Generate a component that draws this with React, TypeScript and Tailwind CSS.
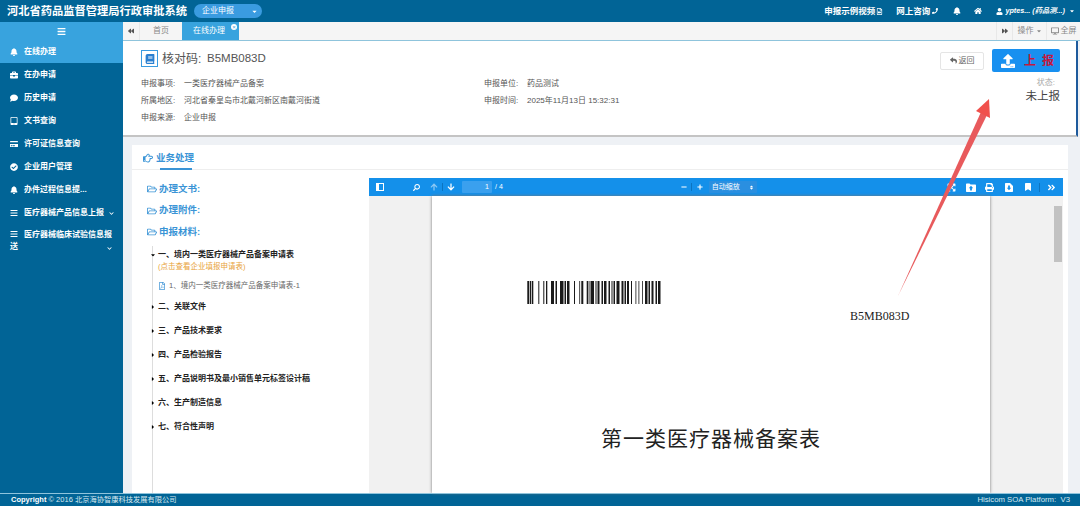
import type { ReactNode } from 'react'
import {
  FaAngleDoubleRight, FaArrowDown, FaArrowUp, FaBars, FaBell, FaBackward, FaBook, FaBookmark, FaBriefcase,
  FaCaretDown, FaCaretRight, FaCheckCircle, FaChevronDown, FaComment, FaCreditCard, FaDesktop, FaExpandArrowsAlt,
  FaForward, FaHome, FaMinus, FaPhone, FaPlus, FaPrint, FaRegFilePdf, FaRegFileVideo,
  FaRegFolderOpen, FaRegHandPointRight, FaReply, FaSearch, FaSort, FaTabletAlt, FaUpload, FaUser,
} from 'react-icons/fa'

const font = { fontFamily: '"Liberation Sans", "Noto Sans CJK SC", sans-serif' }

const menu = [
  { icon: <FaBell />, label: '在线办理', active: true },
  { icon: <FaBriefcase />, label: '在办申请' },
  { icon: <FaComment />, label: '历史申请' },
  { icon: <FaTabletAlt />, label: '文书查询' },
  { icon: <FaCreditCard />, label: '许可证信息查询' },
  { icon: <FaCheckCircle />, label: '企业用户管理' },
  { icon: <FaBell />, label: '办件过程信息提...' },
  { icon: <FaBars />, label: '医疗器械产品信息上报', more: true },
]

const folders = ['办理文书:', '办理附件:', '申报材料:']
const sections = ['二、关联文件', '三、产品技术要求', '四、产品检验报告', '五、产品说明书及最小销售单元标签设计稿', '六、生产制造信息', '七、符合性声明']

const bars = [
  [0.3, 2], [3, 1.3], [5, 1.3], [11.3, 1], [16.3, 1], [19, 1.3], [24, 3], [28.5, 1.5], [33, 3.5], [37.5, 1.5], [40, 2.5],
  [47, 1], [52.3, 0.8], [54.3, 2], [59.7, 1.7], [62.5, 1], [64, 3], [68.5, 1], [70.5, 2], [74.5, 1.5], [77, 2.5],
  [81.5, 1.5], [84.5, 1], [86.5, 1.5], [89.5, 3], [94.5, 2], [97.5, 1.5], [100, 2], [104, 1], [108.5, 0.8], [111.5, 0.8],
  [115, 0.8], [118, 2.5], [121.5, 1.5], [124.5, 2], [128.5, 1.5], [131, 2.5],
]

function Barcode() {
  return (
    <svg width="134" height="23" viewBox="0 0 134 23" className="block">
      {bars.map(([x, w]) => <rect key={x} x={x} y="0" width={w} height="23" fill="#1a1a1a" />)}
    </svg>
  )
}

function SidebarToggleIcon() {
  return (
    <svg width="8" height="8" viewBox="0 0 8 8">
      <path d="M0 0h8v8H0z M3 1v6h4V1z" fill="white" fillRule="evenodd" />
    </svg>
  )
}

function OpenFileIcon() {
  return (
    <svg width="10" height="9" viewBox="0 0 10 9">
      <path d="M0 1.5C0 .9.4.5 1 .5h2.5l1 1H9c.6 0 1 .4 1 1V8c0 .6-.4 1-1 1H1c-.6 0-1-.4-1-1z" fill="white" />
      <path d="M5 2.8 7.2 5.2H5.9V7.6H4.1V5.2H2.8z" fill="#1490ea" />
    </svg>
  )
}

function DownloadFileIcon() {
  return (
    <svg width="8" height="9" viewBox="0 0 8 9">
      <path d="M1 0h4l3 3v5c0 .6-.4 1-1 1H1c-.6 0-1-.4-1-1V1c0-.6.4-1 1-1z" fill="white" />
      <path d="M3.1 2.6h1.8v2.2h1.3L4 7.2 1.8 4.8h1.3z" fill="#1490ea" />
    </svg>
  )
}

function ToolButton({ children }: { children: ReactNode }) {
  return <span className="flex w-[19px] justify-center text-[9px]">{children}</span>
}

function InfoRow({ label, value }: { label: string; value: string }) {
  return (
    <div className="flex h-[17px] items-center text-[8px] text-[#555]">
      <span className="w-[43px]">{label}</span>
      <span>{value}</span>
    </div>
  )
}

function Sidebar() {
  return (
    <aside className="w-[123px] shrink-0 bg-[#016496] text-white">
      <div className="flex h-[18px] items-center justify-center bg-[#38a3de] text-[9px]"><FaBars /></div>
      {menu.map((item) => (
        <div key={item.label} className={`flex h-[23px] items-center pl-[10px] pt-[1px] text-[8px] font-bold ${item.active ? 'bg-[#38a3de]' : ''}`}>
          <span className="w-[14px] text-[8px]">{item.icon}</span>
          <span>{item.label}</span>
          {item.more && <FaChevronDown className="ml-[5px] text-[5px]" />}
        </div>
      ))}
      <div className="relative px-[10px] pt-[5px] text-[8px] font-bold leading-[12px]">
        <span className="inline-block w-[14px] align-[-1px]"><FaBars /></span>
        医疗器械临床试验信息报送
        <FaChevronDown className="absolute right-[11px] top-[22px] text-[5px]" />
      </div>
    </aside>
  )
}

function TabBar() {
  return (
    <div className="flex h-[19px] shrink-0 items-stretch border-b border-[#8fc4dc] bg-[#f5f5f5] text-[8px] text-[#888]">
      <div className="flex w-[17px] items-center justify-center border-r border-[#e8e8e8] text-[#555]"><FaBackward className="text-[6px]" /></div>
      <div className="flex w-[42px] items-center justify-center">首页</div>
      <div className="relative flex w-[57px] items-center justify-center bg-[#38a3de] pr-[3px] text-white">
        在线办理
        <span className="absolute right-[2px] top-[2px] flex h-[6px] w-[6px] items-center justify-center rounded-full bg-white text-[6px] leading-none text-[#38a3de]">×</span>
      </div>
      <div className="flex-1" />
      <div className="flex w-[17px] items-center justify-center border-x border-[#e8e8e8] text-[#555]"><FaForward className="text-[6px]" /></div>
      <div className="flex w-[34px] items-center justify-center gap-[2px] border-r border-[#e8e8e8]">操作<FaCaretDown className="text-[6px]" /></div>
      <div className="flex w-[33px] items-center justify-center gap-[2px]"><FaDesktop className="text-[8px]" />全屏</div>
    </div>
  )
}

function InfoPanel() {
  return (
    <section className="mr-[2px] flex h-[96px] shrink-0 justify-between border-r-2 border-b-2 border-r-[#1e5a9c] border-b-[#c4c4c4] bg-white pl-[18px] pr-[16px]">
      <div className="w-[343px] pt-[9px]">
        <div className="flex h-[17px] items-center">
          <span className="flex h-[17px] w-[17px] items-center justify-center border border-[#3a9be0] text-[10px] text-[#2a7fd0]"><FaBook /></span>
          <span className="ml-[4px] w-[45px] text-[12px] text-[#555]">核对码:</span>
          <span className="text-[11.5px] text-[#555]">B5MB083D</span>
        </div>
        <div className="mt-[8px]">
          <InfoRow label="申报事项:" value="一类医疗器械产品备案" />
          <InfoRow label="所属地区:" value="河北省秦皇岛市北戴河新区南戴河街道" />
          <InfoRow label="申报来源:" value="企业申报" />
        </div>
      </div>
      <div className="flex-1 pt-[34px]">
        <InfoRow label="申报单位:" value="药品测试" />
        <InfoRow label="申报时间:" value="2025年11月13日 15:32:31" />
      </div>
      <div className="flex flex-col items-end pt-[8px]">
        <div className="flex items-center gap-[8px]">
          <div className="flex h-[18px] w-[44px] items-center justify-center gap-[2px] rounded-[2px] border border-[#e5e5e5] text-[8px] text-[#666]"><FaReply className="text-[7px]" />返回</div>
          <div className="flex h-[23px] w-[68px] items-center gap-[9px] rounded-[2px] bg-[#1890f0] pl-[9px] text-[12px] font-bold tracking-[6px] text-[#c4183c]"><FaUpload className="text-[14px] text-white" />上报</div>
        </div>
        <div className="mt-[5px] pr-[5px] text-[8px] text-[#aaa]">状态:</div>
        <div className="text-[11.5px] leading-[14px] text-[#444]">未上报</div>
      </div>
    </section>
  )
}

function FileTree() {
  return (
    <div className="w-[237px] shrink-0 overflow-hidden pl-[13px] pt-[3px]">
      {folders.map((name) => (
        <div key={name} className="mb-[5.5px] flex h-[16px] items-center gap-[2px] pl-[2px] text-[9.5px] font-bold text-[#3a94d6]">
          <FaRegFolderOpen className="text-[10px]" />{name}
        </div>
      ))}
      <div className="ml-[7px] h-full border-l border-[#ddd]">
        <div className="relative pl-[5px] pt-[3px] text-[8px] font-bold leading-[12px] text-[#222]">
          <FaCaretDown className="absolute left-[-3px] top-[6px] text-[6px] text-black" />
          一、境内一类医疗器械产品备案申请表
        </div>
        <div className="pl-[5px] text-[7.5px] leading-[12px] text-[#e8a33a]">(点击查看企业填报申请表)</div>
        <div className="flex items-center gap-[3px] pl-[5px] pt-[7px] text-[7.5px] leading-[12px] text-[#666]">
          <FaRegFilePdf className="text-[8px] text-[#4a9ad8]" />1、境内一类医疗器械产品备案申请表-1
        </div>
        <div className="pt-[3px]">
          {sections.map((name) => (
            <div key={name} className="relative flex h-[24px] items-center pl-[5px] text-[8px] font-bold text-[#222]">
              <FaCaretRight className="absolute left-[-3px] text-[6px] text-black" />
              {name}
            </div>
          ))}
        </div>
      </div>
    </div>
  )
}

function PdfViewer() {
  return (
    <div className="flex min-w-0 flex-1 flex-col">
      <div className="flex h-[18px] shrink-0 items-center bg-[#1490ea] pl-[7px] pr-[2px] text-[8px] text-white">
        <SidebarToggleIcon />
        <FaSearch className="ml-[29px] -scale-x-100 text-[7px]" />
        <FaArrowUp className="ml-[10px] text-[#8cc8f4]" />
        <span className="ml-[4px] h-[8px] w-px bg-[#0c74c0]" />
        <FaArrowDown className="ml-[4px]" />
        <span className="ml-[7px] flex h-[12px] w-[30px] items-center justify-end rounded-[1px] bg-[#3aa0ee] pr-[3px] text-[7px]">1</span>
        <span className="ml-[3px] text-[7px]">/ 4</span>
        <FaMinus className="ml-[178px] text-[6px]" />
        <span className="ml-[4px] h-[8px] w-px bg-[#0c74c0]" />
        <FaPlus className="ml-[5px] text-[6px]" />
        <span className="ml-[6px] flex h-[12px] w-[48px] items-center justify-between rounded-[1px] bg-[#2a8fe0] px-[3px] text-[7px]">自动缩放<FaSort className="text-[5px]" /></span>
        <div className="flex-1" />
        <div className="flex items-center">
          <ToolButton><FaExpandArrowsAlt /></ToolButton>
          <ToolButton><OpenFileIcon /></ToolButton>
          <ToolButton><FaPrint /></ToolButton>
          <ToolButton><DownloadFileIcon /></ToolButton>
          <ToolButton><FaBookmark className="text-[8px]" /></ToolButton>
          <span className="ml-[2px] mr-[2px] h-[9px] w-px bg-[#0c74c0]" />
          <ToolButton><FaAngleDoubleRight /></ToolButton>
        </div>
      </div>
      <div className="flex min-h-0 flex-1 bg-[#f1f1f1]">
        <div className="ml-[63px] flex w-[558px] shrink-0 flex-col bg-white shadow-[0_0_3px_#777]">
          <div className="ml-[95px] mt-[85px]"><Barcode /></div>
          <div className="ml-[418px] mt-[3px] text-[12px] text-[#222]" style={{ fontFamily: '"Liberation Serif", serif' }}>B5MB083D</div>
          <div className="mt-[98px] text-center text-[21px] tracking-[1px] text-[#222]">第一类医疗器械备案表</div>
        </div>
        <div className="flex-1" />
        <div className="mr-[1px] w-[8px] pt-[10px]"><div className="h-[56px] bg-[#c2c2c2]" /></div>
      </div>
    </div>
  )
}

export default function App() {
  return (
    <div className="relative flex h-[506px] w-[1080px] flex-col overflow-hidden bg-[#016496]" style={font}>
      <header className="flex h-[22px] shrink-0 items-center pl-[7px] pr-[5px] text-white">
        <span className="text-[11.25px] font-bold">河北省药品监督管理局行政审批系统</span>
        <span className="ml-[7px] flex h-[14px] w-[68px] items-center justify-between rounded-full bg-[#3a9be0] pl-[8px] pr-[4px] text-[8px]">企业申报<FaCaretDown className="text-[7px]" /></span>
        <div className="flex-1" />
        <div className="flex items-center text-[8.5px] font-bold">
          <span className="flex items-center gap-[1px]">申报示例视频<FaRegFileVideo className="text-[7px]" /></span>
          <span className="ml-[13px] flex items-center gap-[2px]">网上咨询<FaPhone className="text-[6px]" /></span>
          <FaBell className="ml-[15px] text-[8px]" />
          <FaHome className="ml-[13px] text-[8px]" />
          <FaUser className="ml-[14px] text-[7px]" />
          <span className="ml-[2px] text-[7.25px] italic">yptes... (药品测...)</span>
          <FaCaretDown className="ml-[4px] text-[6px]" />
        </div>
      </header>
      <div className="flex min-h-0 flex-1">
        <Sidebar />
        <main className="flex min-w-0 flex-1 flex-col bg-[#eef1f5]">
          <TabBar />
          <InfoPanel />
          <section className="mx-[9px] mt-[8px] flex min-h-0 w-[936px] flex-1 flex-col bg-white">
            <div className="relative flex h-[25px] shrink-0 items-center gap-[3px] border-b border-[#eee] pl-[11px] pt-[2px] text-[9.5px] font-bold text-[#3a94d6]">
              <FaRegHandPointRight className="text-[10px]" />业务处理
              <span className="absolute bottom-[-1px] left-[28px] h-[2px] w-[32px] bg-[#3a94d6]" />
            </div>
            <div className="flex min-h-0 flex-1 pr-[5px] pt-[8px]">
              <FileTree />
              <PdfViewer />
            </div>
          </section>
        </main>
      </div>
      <footer className="flex h-[13px] shrink-0 items-center justify-between border-t border-[#8fc4dc] pl-[11px] pr-[10px] text-[7.5px] text-[#d8e8f0]">
        <span><b className="text-white">Copyright</b> © 2016 <span className="text-[7.25px]">北京海协智康科技发展有限公司</span></span>
        <span className="text-[7.75px]">Hisicom SOA Platform:&nbsp; V3</span>
      </footer>
      <svg className="pointer-events-none absolute left-0 top-0" width="1080" height="506" viewBox="0 0 1080 506">
        <path d="M898 296 L981 112 L987 115 Z" fill="#e85a5c" />
        <path d="M989 99 L990 118 L976 111 Z" fill="#f0504c" />
      </svg>
    </div>
  )
}
